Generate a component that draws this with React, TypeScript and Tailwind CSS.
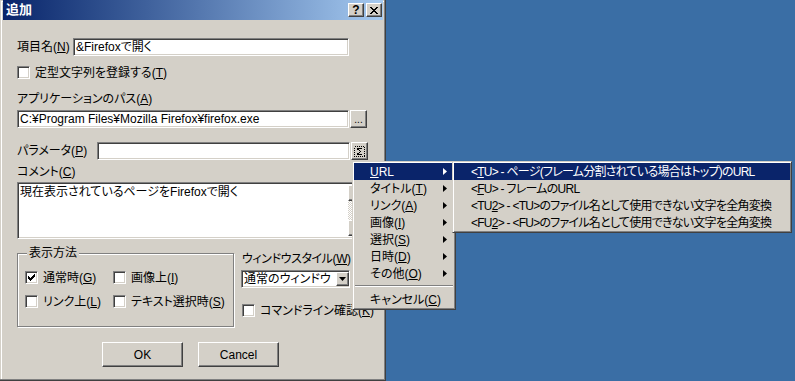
import React from 'react';

const sunken =
  'border border-t-[#808080] border-l-[#808080] border-b-white border-r-white shadow-[inset_1px_1px_#404040,inset_-1px_-1px_#d4d0c8]';
const raised =
  'border border-t-white border-l-white border-b-[#404040] border-r-[#404040] shadow-[inset_-1px_-1px_#808080] bg-[#d4d0c8]';

const TICK = ['......#', '.....##', '#...###', '##.###.', '#####..', '.###...', '..#....'];
const CROSS = ['##....##', '.##..##.', '..####..', '...##...', '..####..', '.##..##.', '##....##'];

function Pixels({ rows }: { rows: string[] }) {
  return (
    <svg width={rows[0].length} height={rows.length} shapeRendering="crispEdges">
      {rows.flatMap((row, y) =>
        row.split('').map((c, x) =>
          c === '#' ? <rect key={`${x}-${y}`} x={x} y={y} width="1" height="1" fill="#000" /> : null
        )
      )}
    </svg>
  );
}

function Acc({ c }: { c: string }) {
  return <span className="underline decoration-1 underline-offset-[1px]">{c}</span>;
}

function Check({ checked }: { checked?: boolean }) {
  return (
    <span className={`w-[13px] h-[13px] shrink-0 bg-white flex items-center justify-center ${sunken}`}>
      {checked && <Pixels rows={TICK} />}
    </span>
  );
}

function Arrow() {
  return (
    <svg width="4" height="7" viewBox="0 0 4 7" className="ml-auto mr-[7px]">
      <path d="M0 0L4 3.5L0 7z" fill="currentColor" />
    </svg>
  );
}

const menuItems: { pre: string; key: string; post: string }[] = [
  { pre: 'タイトル(', key: 'T', post: ')' },
  { pre: 'リンク(', key: 'A', post: ')' },
  { pre: '画像(', key: 'I', post: ')' },
  { pre: '選択(', key: 'S', post: ')' },
  { pre: '日時(', key: 'D', post: ')' },
  { pre: 'その他(', key: 'O', post: ')' },
];

const subItems = [
  { pre: '<', key: 'T', post: 'U> - ページ(フレーム分割されている場合はトップ)のURL' },
  { pre: '<', key: 'F', post: 'U> - フレームのURL' },
  { pre: '<TU', key: '2', post: '> - <TU>のファイル名として使用できない文字を全角変換' },
  { pre: '<FU', key: '2', post: '> - <FU>のファイル名として使用できない文字を全角変換' },
];

export default function App() {
  return (
    <div className="relative w-[795px] h-[381px] overflow-hidden bg-[#3a6ea5] text-[12px] leading-[14px] text-black font-['Liberation_Sans','Noto_Sans_CJK_JP',sans-serif] [font-feature-settings:'palt']">
      {/* dialog */}
      <div className="w-[386px] h-[381px] bg-[#d4d0c8] flex flex-col shadow-[inset_-1px_-1px_#404040,inset_-2px_-2px_#808080,inset_1px_1px_#d4d0c8,inset_2px_2px_#fff]">
        {/* title bar */}
        <div className="mx-[3px] h-[20px] bg-linear-to-r from-[#0a246a] to-[#a6caf0] flex items-center pl-[3px] pr-[1px]">
          <span className="text-white font-bold text-[13px]">追加</span>
          <div className="ml-auto flex gap-[2px]">
            <span className={`w-[16px] h-[14px] flex items-center justify-center text-[12px] font-bold leading-none ${raised}`}>?</span>
            <span className={`w-[16px] h-[14px] flex items-center justify-center ${raised}`}>
              <Pixels rows={CROSS} />
            </span>
          </div>
        </div>

        {/* 項目名 */}
        <div className="mt-[18px] flex items-center h-[18px]">
          <span className="ml-[17px] w-[56px]">
            項目名(<Acc c="N" />)
          </span>
          <div className={`w-[276px] h-[18px] bg-white pl-[2px] flex items-center ${sunken}`}>&amp;Firefoxで開く</div>
        </div>

        {/* 定型文字列 */}
        <div className="mt-[10px] ml-[17px] flex items-center gap-[5px] h-[13px]">
          <Check />
          <span>
            定型文字列を登録する(<Acc c="T" />)
          </span>
        </div>

        <div className="mt-[13px] ml-[17px] h-[14px]">
          アプリケーションのパス(<Acc c="A" />)
        </div>

        {/* path */}
        <div className="mt-[4px] ml-[17px] flex gap-[1px] h-[18px]">
          <div className={`w-[332px] h-[18px] bg-white pl-[2px] flex items-center ${sunken}`}>
            C:¥Program Files¥Mozilla Firefox¥firefox.exe
          </div>
          <div className={`w-[17px] h-[18px] flex items-end justify-center pb-[2px] text-[10px] leading-none ${raised}`}>...</div>
        </div>

        {/* parameter */}
        <div className="mt-[14px] flex items-center gap-[1px] h-[18px]">
          <span className="ml-[17px] w-[79px]">
            パラメータ(<Acc c="P" />)
          </span>
          <div className={`w-[253px] h-[18px] bg-white ${sunken}`} />
          <div className={`w-[17px] h-[18px] flex items-center justify-center ${raised}`}>
            <svg width="11" height="11" viewBox="0 0 11 11" shapeRendering="crispEdges">
              <rect x="0.5" y="0.5" width="10" height="10" fill="none" stroke="#000" strokeDasharray="1 1" />
              <path d="M3 2.5h5M3.5 3l3 2.5l-3 2.5M3 8.5h5" fill="none" stroke="#000" />
            </svg>
          </div>
        </div>

        <div className="mt-[5px] ml-[17px] h-[14px]">
          コメント(<Acc c="C" />)
        </div>

        {/* comment */}
        <div className={`mt-[3px] ml-[17px] w-[348px] h-[57px] bg-white flex ${sunken}`}>
          <div className="flex-1 pl-[2px] pt-[2px]">現在表示されているページをFirefoxで開く</div>
          <div className="w-[16px] flex flex-col mt-[2px] mb-[2px]">
            <div className={`h-[16px] ${raised}`} />
            <div className="flex-1 bg-[repeating-conic-gradient(#d4d0c8_0%_25%,#ffffff_0%_50%)] bg-[length:2px_2px]" />
            <div className={`h-[16px] ${raised}`} />
          </div>
        </div>

        {/* bottom section */}
        <div className="mt-[7px] flex">
          <fieldset className="ml-[17px] w-[217px] h-[81px] border border-[#808080] shadow-[1px_1px_#fff,inset_1px_1px_#fff]">
            <legend className="ml-[9px] px-[2px] bg-[#d4d0c8] h-[14px]">表示方法</legend>
            <div className="mt-[11px] ml-[7px] grid grid-cols-[88px_auto] gap-y-[11px]">
              <div className="flex items-center gap-[5px] h-[13px]">
                <Check checked />
                <span>
                  通常時(<Acc c="G" />)
                </span>
              </div>
              <div className="flex items-center gap-[5px] h-[13px]">
                <Check />
                <span>
                  画像上(<Acc c="I" />)
                </span>
              </div>
              <div className="flex items-center gap-[5px] h-[13px]">
                <Check />
                <span>
                  リンク上(<Acc c="L" />)
                </span>
              </div>
              <div className="flex items-center gap-[5px] h-[13px]">
                <Check />
                <span>
                  テキスト選択時(<Acc c="S" />)
                </span>
              </div>
            </div>
          </fieldset>

          <div className="ml-[7px] flex flex-col">
            <div className="mt-[6px] ml-[1px] h-[14px] tracking-[-0.4px]">
              ウィンドウスタイル(<Acc c="W" />)
            </div>
            <div className={`mt-[4px] w-[109px] h-[18px] bg-white flex items-center ${sunken}`}>
              <span className="pl-[2px] flex-1">通常のウィンドウ</span>
              <span className={`w-[13px] h-[14px] flex items-center justify-center ${raised}`}>
                <svg width="7" height="4" viewBox="0 0 7 4">
                  <path d="M0 0h7L3.5 4z" fill="#000" />
                </svg>
              </span>
            </div>
            <div className="mt-[16px] ml-[1px] flex items-center gap-[5px] h-[13px]">
              <Check />
              <span className="whitespace-nowrap">
                コマンドライン確認(<Acc c="K" />)
              </span>
            </div>
          </div>
        </div>

        {/* buttons */}
        <div className="mt-[15px] ml-[102px] flex gap-[15px]">
          <div className={`w-[81px] h-[25px] flex items-center justify-center ${raised}`}>OK</div>
          <div className={`w-[81px] h-[25px] flex items-center justify-center ${raised}`}>Cancel</div>
        </div>
      </div>

      {/* popup menu */}
      <div className="absolute left-[352px] top-[161px] w-[104px] bg-[#d4d0c8] border border-t-[#d4d0c8] border-l-[#d4d0c8] border-b-[#404040] border-r-[#404040] shadow-[inset_1px_1px_#fff,inset_-1px_-1px_#808080] p-[1px]">
        <div className="h-[17px] flex items-center pl-[16px] bg-[#0a246a] text-white">
          <span>
            <Acc c="U" />
            RL
          </span>
          <Arrow />
        </div>
        {menuItems.map((m) => (
          <div key={m.key} className="h-[17px] flex items-center pl-[16px]">
            <span>
              {m.pre}
              <Acc c={m.key} />
              {m.post}
            </span>
            <Arrow />
          </div>
        ))}
        <div className="h-[9px] pt-[3px] mx-[1px]">
          <div className="h-[2px] border-t border-t-[#808080] border-b border-b-white" />
        </div>
        <div className="h-[17px] flex items-center pl-[16px]">
          <span>
            キャンセル(<Acc c="C" />)
          </span>
        </div>
      </div>

      {/* submenu */}
      <div className="absolute left-[452px] top-[161px] w-[340px] bg-[#d4d0c8] border border-t-[#d4d0c8] border-l-[#d4d0c8] border-b-[#404040] border-r-[#404040] shadow-[inset_1px_1px_#fff,inset_-1px_-1px_#808080] p-[1px] tracking-[-0.75px]">
        {subItems.map((s, i) => (
          <div
            key={i}
            className={`h-[17px] flex items-center pl-[17px] whitespace-nowrap ${i === 0 ? 'bg-[#0a246a] text-white' : ''}`}
          >
            {s.pre}
            <Acc c={s.key} />
            {s.post}
          </div>
        ))}
      </div>
    </div>
  );
}
